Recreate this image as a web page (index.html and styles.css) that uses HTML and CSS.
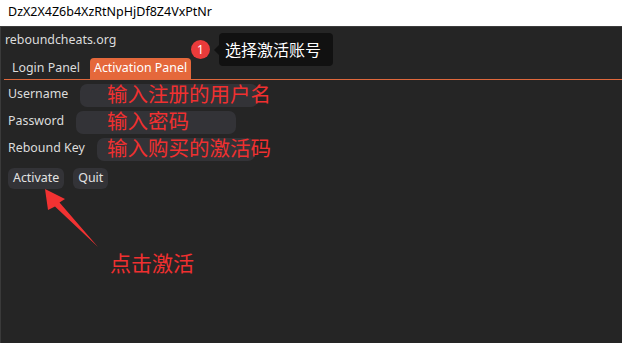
FILE: index.html
```html
<!DOCTYPE html>
<html>
<head>
<meta charset="utf-8">
<link rel="stylesheet" href="styles.css">
</head>
<body>
<div class="titlebar">DzX2X4Z6b4XzRtNpHjDf8Z4VxPtNr</div>
<div class="window">
  <div class="site">reboundcheats.org</div>
  <div class="tabs">
    <div class="tab">Login Panel</div>
    <div class="tab active">Activation Panel</div>
  </div>
  <div class="form">
    <div class="row"><span class="label">Username</span><span class="field w1"></span></div>
    <div class="row"><span class="label">Password</span><span class="field w2"></span></div>
    <div class="row"><span class="label">Rebound Key</span><span class="field w3"></span></div>
    <div class="buttons"><span class="btn">Activate</span><span class="btn">Quit</span></div>
    <div class="notes">
      <div class="note">输入注册的用户名</div>
      <div class="note">输入密码</div>
      <div class="note">输入购买的激活码</div>
    </div>
  </div>
  <div class="badge">1</div>
  <div class="tooltip">选择激活账号</div>
  <svg class="arrow" width="622" height="343" viewBox="0 0 622 343">
    <polygon points="45,189 65,199 59.5,202.5 98,247 55,206.5 48,210" fill="#f23232"/>
  </svg>
  <div class="click">点击激活</div>
</div>
</body>
</html>
```
FILE: styles.css
```css
* { box-sizing: border-box; }
html, body { margin: 0; padding: 0; }
body {
  width: 622px;
  height: 343px;
  overflow: hidden;
  background: #252525;
  font-family: "Noto Sans", "Noto Sans CJK SC", sans-serif;
}
.titlebar {
  height: 27px;
  background: #ffffff;
  color: #000;
  font-size: 12.5px;
  line-height: 23px;
  padding-left: 8px;
  border-bottom: 1px solid #3c3c3c;
}
.window {
  position: relative;
  height: 316px;
  border-left: 1px solid #3a3a3a;
  color: #dcdcdc;
  font-size: 12.4px;
}
.site {
  padding: 3px 0 0 4px;
  height: 31px;
  line-height: 19px;
}
.tabs {
  display: flex;
  gap: 2px;
  margin-left: 3px;
  padding-left: 4px;
  border-bottom: 1px solid #e0683c;
  height: 22px;
  align-items: flex-end;
}
.tab {
  height: 21px;
  line-height: 20px;
  padding: 0 4px;
  border-radius: 4px 4px 0 0;
  color: #dcdcdc;
}
.tab.active {
  background: #e5683b;
  color: #ffffff;
  margin-left: 4px;
}
.form {
  position: relative;
  padding: 4px 0 0 7px;
}
.row {
  display: flex;
  align-items: center;
  gap: 12px;
  height: 23px;
  margin-bottom: 4px;
  line-height: 18px;
}
.label { margin-top: -3px; }
.field {
  height: 23px;
  border-radius: 7px;
  background: #333337;
}
.w1 { width: 178px; }
.w2 { width: 160px; }
.w3 { width: 158px; }
.buttons {
  display: flex;
  gap: 9px;
  margin-top: 7px;
}
.btn {
  height: 21px;
  line-height: 20px;
  padding: 0 5px;
  border-radius: 6px;
  background: #333337;
  color: #e2e2e2;
}
.notes {
  position: absolute;
  left: 106px;
  top: 1px;
  display: flex;
  flex-direction: column;
}
.note {
  height: 27px;
  line-height: 24px;
  font-family: "Noto Sans CJK SC", sans-serif;
  font-size: 20.5px;
  color: #f03030;
}
.badge {
  position: absolute;
  left: 190px;
  top: 13px;
  width: 19px;
  height: 19px;
  border-radius: 50%;
  background: #ea3b3b;
  color: #fff;
  font-size: 12px;
  line-height: 19px;
  text-align: center;
}
.tooltip {
  position: absolute;
  left: 218px;
  top: 6px;
  width: 114px;
  height: 33px;
  border-radius: 4px;
  background: #111111;
  color: #ffffff;
  font-family: "Noto Sans CJK SC", sans-serif;
  font-size: 16px;
  line-height: 33px;
  padding-left: 6px;
}
.tooltip::before {
  content: "";
  position: absolute;
  left: -5px;
  top: 12px;
  border-style: solid;
  border-width: 5px 5px 5px 0;
  border-color: transparent #111111 transparent transparent;
}
.arrow {
  position: absolute;
  left: -1px;
  top: -27px;
  pointer-events: none;
}
.click {
  position: absolute;
  left: 109px;
  top: 221px;
  font-family: "Noto Sans CJK SC", sans-serif;
  font-size: 21px;
  line-height: 28px;
  color: #f03030;
}
```
